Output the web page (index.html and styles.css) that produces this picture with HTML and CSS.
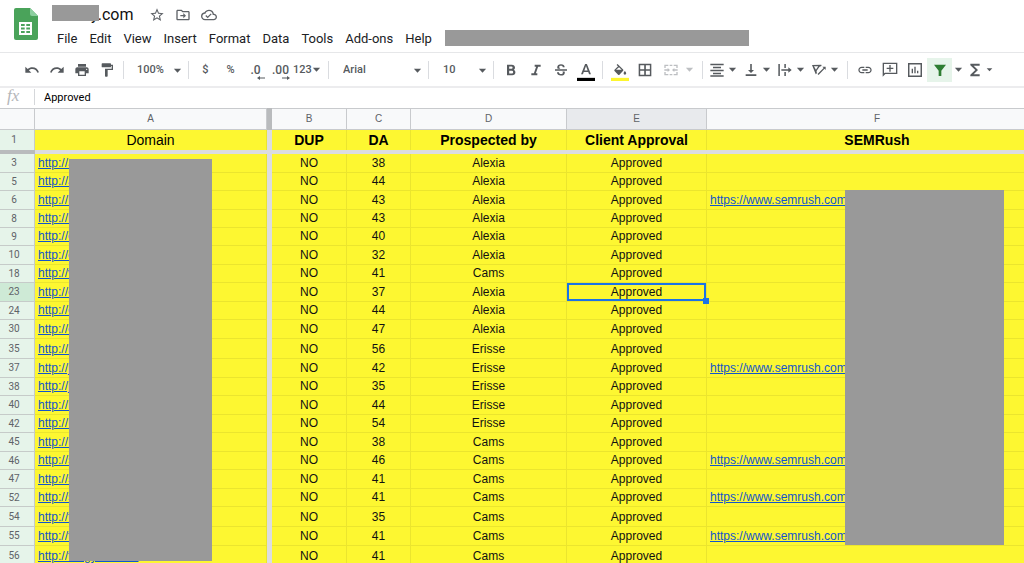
FILE: index.html
```html
<!DOCTYPE html>
<html lang="en">
<head>
<meta charset="utf-8">
<title>Sheet</title>
<link rel="stylesheet" href="styles.css">
</head>
<body>
<svg class="defs" aria-hidden="true">
  <symbol id="down" viewBox="0 0 8 8"><path d="M.8 2.500h6.400L4 5.900z"/></symbol>
</svg>
<header class="top">
  <svg class="logo" viewBox="0 0 24 32" aria-hidden="true">
    <path fill="#4aa35a" d="M2 0h14l8 8v22a2 2 0 0 1-2 2H2a2 2 0 0 1-2-2V2a2 2 0 0 1 2-2z"/>
    <path fill="#8ccf9f" d="M16 0l8 8h-6a2 2 0 0 1-2-2z"/>
    <path fill="#fff" fill-rule="evenodd" d="M5 14h13v13H5zM7 16v2h3.700v-2zM12.300 16v2H16v-2zM7 19.500v2h3.700v-2zM12.300 19.500v2H16v-2zM7 23v2h3.700v-2zM12.300 23v2H16v-2z"/>
  </svg>
  <div class="top-main">
    <div class="title-row">
      <h1 class="title">y.com<span class="mask mask-title"></span></h1>
      <button class="title-btn" aria-label="Star"><svg viewBox="0 0 24 24"><path d="M22 9.240l-7.190-.62L12 2 9.190 8.630 2 9.240l5.460 4.730L5.820 21 12 17.270 18.180 21l-1.630-7.030L22 9.240zM12 15.400l-3.760 2.270 1-4.280-3.320-2.880 4.380-.38L12 6.100l1.710 4.040 4.380.38-3.320 2.880 1 4.280L12 15.400z"/></svg></button>
      <button class="title-btn" aria-label="Move"><svg viewBox="0 0 24 24"><path d="M20 6h-8l-2-2H4c-1.100 0-2 .9-2 2v12c0 1.100.9 2 2 2h16c1.100 0 2-.9 2-2V8c0-1.100-.9-2-2-2zm0 12H4V6h5.170l2 2H20v10zm-7.500-1l4-4-4-4v3H8v2h4.500z"/></svg></button>
      <button class="title-btn" aria-label="Saved"><svg viewBox="0 0 24 24"><path d="M19.350 10.040A7.490 7.490 0 0 0 12 4C9.110 4 6.600 5.640 5.350 8.040A5.994 5.994 0 0 0 0 14c0 3.310 2.690 6 6 6h13c2.760 0 5-2.240 5-5 0-2.640-2.050-4.780-4.650-4.960zM19 18H6c-2.210 0-4-1.790-4-4s1.790-4 4-4h.71C7.370 7.690 9.480 6 12 6c3.040 0 5.500 2.460 5.500 5.500v.5H19c1.660 0 3 1.340 3 3s-1.340 3-3 3zm-9-3.820l-2.090-2.090L6.500 13.500 10 17l6.010-6.010-1.410-1.410z"/></svg></button>
    </div>
    <nav class="menu">
      <button>File</button><button>Edit</button><button>View</button><button>Insert</button><button>Format</button><button>Data</button><button>Tools</button><button>Add-ons</button><button>Help</button>
      <span class="mask-menu"></span>
    </nav>
  </div>
</header>
<div class="toolbar">
  <button class="tool" aria-label="Undo"><svg viewBox="0 0 24 24"><path d="M12.500 8c-2.650 0-5.050.99-6.900 2.600L2 7v9h9l-3.620-3.620c1.390-1.160 3.160-1.880 5.120-1.880 3.540 0 6.550 2.310 7.600 5.500l2.370-.78C21.080 11.030 17.150 8 12.500 8z"/></svg></button>
  <button class="tool" aria-label="Redo"><svg viewBox="0 0 24 24"><path d="M18.400 10.600C16.550 8.990 14.150 8 11.500 8c-4.650 0-8.580 3.030-9.960 7.220L3.900 16c1.050-3.190 4.050-5.500 7.600-5.500 1.950 0 3.730.72 5.120 1.880L13 16h9V7l-3.600 3.600z"/></svg></button>
  <button class="tool" aria-label="Print"><svg viewBox="0 0 24 24"><path d="M19 8H5c-1.660 0-3 1.340-3 3v6h4v4h12v-4h4v-6c0-1.660-1.340-3-3-3zm-3 11H8v-5h8v5zm3-7c-.55 0-1-.45-1-1s.45-1 1-1 1 .45 1 1-.45 1-1 1zm-1-9H6v4h12V3z"/></svg></button>
  <button class="tool" aria-label="Paint format"><svg viewBox="0 0 24 24"><path d="M18 4V3c0-.55-.45-1-1-1H5c-.55 0-1 .45-1 1v4c0 .55.45 1 1 1h12c.55 0 1-.45 1-1V6h1v4H9v11c0 .55.45 1 1 1h2c.55 0 1-.45 1-1v-9h8V4h-3z"/></svg></button>
  <span class="sep"></span>
  <span class="pick pick-zoom"><select aria-label="Zoom"><option>100%</option></select><svg class="arrow"><use href="#down"/></svg></span>
  <span class="sep"></span>
  <button class="tool">$</button>
  <button class="tool">%</button>
  <button class="tool tool-dec" aria-label="Decrease decimals"><span>.0</span><svg viewBox="0 0 8 4"><path d="M0 2l3-2v1.400h5v1.200H3V4z"/></svg></button>
  <button class="tool tool-dec" aria-label="Increase decimals"><span>.00</span><svg viewBox="0 0 8 4"><path d="M8 2L5 0v1.400H0v1.200h5V4z"/></svg></button>
  <button class="formats">123<svg class="arrow"><use href="#down"/></svg></button>
  <span class="sep"></span>
  <span class="pick pick-font"><select aria-label="Font"><option>Arial</option></select><svg class="arrow"><use href="#down"/></svg></span>
  <span class="sep"></span>
  <span class="pick pick-size"><select aria-label="Font size"><option>10</option></select><svg class="arrow"><use href="#down"/></svg></span>
  <span class="sep"></span>
  <button class="tool" aria-label="Bold"><svg viewBox="0 0 24 24"><path d="M16.100 11.700c1.100-.8 1.900-2 1.900-3.200C18 5.800 15.900 4 13.200 4H6v16h8c2.700 0 4.600-2.100 4.600-4.600 0-1.700-1-3.100-2.500-3.700zM9.300 6.800h3.400a1.700 1.700 0 0 1 0 3.400H9.300zm4 10.400h-4v-3.900h4a1.950 1.950 0 0 1 0 3.900z"/></svg></button>
  <button class="tool" aria-label="Italic"><svg viewBox="0 0 24 24"><path d="M10 4v3h2.210l-3.420 10H5v3h9v-3h-2.210l3.420-10H19V4z"/></svg></button>
  <button class="tool" aria-label="Strikethrough"><svg viewBox="0 0 24 24"><path d="M3 11h18v2.200H3zM7 10c-.5-.8-.6-1.500-.6-2.300C6.400 5.200 8.700 3.500 12 3.500s5.500 1.800 5.500 4.500h-2.800c0-1.400-1-2.200-2.700-2.200s-2.700.7-2.700 1.800c0 .9.500 1.600 1.700 2.400zM14 14.200h3.300c.3.500.4 1.100.4 1.800 0 2.700-2.300 4.400-5.700 4.400s-6-1.800-6-5h2.900c0 1.800 1.200 2.700 3.100 2.700 1.700 0 2.800-.7 2.800-2 0-.8-.2-1.400-.8-1.900z"/></svg></button>
  <button class="tool" aria-label="Text colour"><svg class="swatched" viewBox="0 0 20 20"><path d="M9 1L4.500 12.500h2.100l.9-2.500h5l.9 2.500h2.100L11 1zM8.200 8.200L10 3.200l1.800 5z"/><path fill="#000" d="M0 16.500h20V20H0z"/></svg></button>
  <span class="sep"></span>
  <button class="tool" aria-label="Fill colour"><svg class="swatched" viewBox="0 0 20 20"><path d="M13.500 7.200L7.300 1 6.200 2.100l1.600 1.600-3.900 3.900c-.4.400-.4 1 0 1.400l4 4c.4.4 1.100.4 1.500 0l4.100-4.300c.4-.4.4-1 0-1.500zM5.600 7.600L8.900 4.800l3 2.800zM15.400 9s-1.400 1.600-1.400 2.500a1.400 1.400 0 0 0 2.900 0c0-.9-1.500-2.500-1.500-2.500z"/><path fill="#fdf62f" d="M0 16.500h20V20H0z"/></svg></button>
  <button class="tool" aria-label="Borders"><svg viewBox="0 0 24 24"><path d="M2.500 2.500v19h19v-19zm8.300 16.800H4.800v-6h6zm0-8.600H4.800v-6h6zm8.500 8.600h-6v-6h6zm0-8.600h-6v-6h6z"/></svg></button>
  <button class="tool-dd merge" aria-label="Merge cells"><svg viewBox="0 0 24 24"><path d="M2 4h6v2H4v3H2zM10 4h4v2h-4zM16 4h6v5h-2V6h-4zM2 15h2v3h4v2H2zM10 18h4v2h-4zM20 15h2v5h-6v-2h4zM2 11h5V9l3.500 3L7 15v-2H2zM22 11h-5V9l-3.500 3 3.500 3v-2h5z"/></svg><svg class="arrow"><use href="#down"/></svg></button>
  <span class="sep"></span>
  <button class="tool-dd" aria-label="Horizontal align"><svg viewBox="0 0 24 24"><path d="M2 2.500h20v2.300H2zM6 7h12v2.300H6zM2 11.500h20v2.300H2zM6 16h12v2.300H6zM2 20h20v2.300H2z"/></svg><svg class="arrow"><use href="#down"/></svg></button>
  <button class="tool-dd" aria-label="Vertical align"><svg viewBox="0 0 24 24"><path d="M16.500 12H13.200V3h-2.400v9H7.500l4.500 4.500zM4 18.500h16v2.400H4z"/></svg><svg class="arrow"><use href="#down"/></svg></button>
  <button class="tool-dd" aria-label="Text wrapping"><svg viewBox="0 0 24 24"><path d="M2 3h2.300v18H2zM11 3h2.300v6H11zM11 15h2.300v6H11zM6.500 11H17V8l5 4-5 4v-3H6.500z"/></svg><svg class="arrow"><use href="#down"/></svg></button>
  <button class="tool-dd" aria-label="Text rotation"><svg viewBox="0 0 24 24"><path fill-rule="evenodd" d="M1.500 4.500L15.500 4l.3 2-3 1-4.500 6.500.6 3.500-1.800 1.500zM4.500 6.200l2.900 5.400L10.800 6.500zM22 7v5l-1.700-1.700-9 9.200-1.500-1.500 9.100-9.100L17 7z"/></svg><svg class="arrow"><use href="#down"/></svg></button>
  <span class="sep"></span>
  <button class="tool" aria-label="Insert link"><svg viewBox="0 0 24 24"><path d="M3.900 12c0-1.710 1.390-3.100 3.100-3.100h4V7H7c-2.760 0-5 2.240-5 5s2.240 5 5 5h4v-1.900H7c-1.710 0-3.100-1.390-3.100-3.100zM8 13h8v-2H8v2zm9-6h-4v1.900h4c1.710 0 3.100 1.390 3.100 3.100s-1.390 3.100-3.100 3.100h-4V17h4c2.760 0 5-2.240 5-5s-2.240-5-5-5z"/></svg></button>
  <button class="tool" aria-label="Insert comment"><svg viewBox="0 0 24 24"><path d="M1 1h22v17H5l-4 4zM3 3v14l1.200-1H21V3zM11 4.500h2V8.500h4v2h-4v4h-2v-4H7v-2h4z"/></svg></button>
  <button class="tool" aria-label="Insert chart"><svg viewBox="0 0 24 24"><path d="M1.500 1.500h21v21h-21zM3.700 3.700v16.600h16.600V3.700zM7 10h2v7H7zM11 7h2v10h-2zM15 13h2v4h-2z"/></svg></button>
  <button class="tool filter" aria-label="Filter"><svg viewBox="0 0 24 24"><path d="M3 4h18l-7 9v8h-4v-8z"/></svg></button>
  <button class="tool-arrow" aria-label="Filter views"><svg class="arrow"><use href="#down"/></svg></button>
  <button class="tool-dd" aria-label="Functions"><svg viewBox="0 0 24 24"><path d="M19 2.500H5V5l7.500 7L5 19v2.500h14v-3.200H10L16.500 12 10 5.700h9z"/></svg><svg class="arrow arrow-small"><use href="#down"/></svg></button>
</div>
<div class="formula">
  <label class="fx" for="cell-value">fx</label>
  <input id="cell-value" class="cell-value" value="Approved">
</div>
<main class="grid">
  <table>
    <colgroup><col class="c-num"><col class="c-a"><col class="c-freeze"><col class="c-b"><col class="c-c"><col class="c-d"><col class="c-e"><col class="c-f"></colgroup>
    <thead>
      <tr class="letters"><th></th><th>A</th><th class="bar"></th><th>B</th><th>C</th><th>D</th><th class="current">E</th><th>F</th></tr>
      <tr class="names"><th class="num">1</th><td class="plain">Domain</td><td class="freeze"></td><td>DUP</td><td>DA</td><td>Prospected by</td><td>Client Approval</td><td>SEMRush</td></tr>
      <tr class="freeze-row"><td class="bar"></td><td colspan="7"></td></tr>
    </thead>
    <tbody id="rows"></tbody>
  </table>
  <span class="mask mask-domains"></span>
  <span class="mask mask-semrush"></span>
</main>
<script src="rows.js"></script>
</body>
</html>
```
FILE: styles.css
```css
* { box-sizing: border-box; }
body { margin: 0; height: 100vh; overflow: hidden; display: flex; flex-direction: column; background: #fff; color: #202124; font-family: Roboto, Arial, sans-serif; }
button { border: 0; padding: 0; margin: 0; background: none; color: inherit; font: inherit; }
svg { display: block; fill: currentColor; flex: none; }
.defs { position: absolute; width: 0; height: 0; }
.mask { position: absolute; background: #999; }

.top { flex: none; display: flex; height: 53px; padding: 8px 0 0 14px; border-bottom: 1px solid #e6e7e9; }
.logo { width: 24px; height: 32px; }
.top-main { flex: 1; margin: -4px 0 0 14px; }
.title-row { display: flex; align-items: center; height: 22px; }
.title { position: relative; margin: 0 16px 0 0; padding-left: 39px; font-size: 16px; line-height: 22px; font-weight: 400; color: #111; }
.mask-title { left: 0; top: 1px; width: 47px; height: 16px; }
.title-btn { width: 16px; margin-right: 10px; color: #5f6368; }
.title-btn svg { width: 16px; height: 16px; }
.menu { display: flex; align-items: center; gap: 12px; padding-left: 5px; height: 24px; font-size: 13px; }
.mask-menu { width: 304px; height: 16px; margin-left: 1px; background: #999; }

.toolbar { flex: none; display: flex; align-items: center; height: 35px; padding-left: 19px; border-bottom: 2px solid #ececee; color: #565a5e; font-size: 11px; font-weight: 500; }
.sep { flex: none; width: 1px; height: 18px; margin: 0 4px; background: #dadce0; }
.tool { flex: none; display: flex; align-items: center; justify-content: center; width: 25px; height: 24px; }
.tool svg, .tool-dd svg { width: 16px; height: 16px; }
.tool .swatched { width: 18px; height: 18px; margin-top: 4px; }
.arrow, .tool-dd .arrow { width: 9px; height: 9px; }
.tool-dd .arrow-small { width: 7px; height: 7px; }
.tool-dd { flex: none; display: flex; align-items: center; gap: 3px; width: 34px; padding-left: 2px; height: 24px; }
.merge { width: 41px; padding-left: 6px; gap: 6px; color: #bdbfc2; }
.tool-arrow { width: 13px; display: flex; justify-content: center; }
.filter { background: #e6f4ea; color: #2e7d32; }
.tool-dec { flex-direction: column; font-size: 12px; line-height: 12px; padding-top: 4px; }
.tool-dec svg { width: 8px; height: 4px; align-self: flex-end; margin-right: 3px; }
.formats { display: flex; align-items: center; width: 31px; }
.pick { position: relative; flex: none; }
.pick select { width: 100%; height: 24px; border: 0; padding: 0; background: none; appearance: none; color: inherit; font: inherit; }
.pick .arrow { position: absolute; right: 2px; top: 8px; pointer-events: none; }
.pick-zoom { width: 56px; }
.pick-zoom select { padding-left: 9px; }
.pick-font { width: 91px; }
.pick-font select { padding-left: 10px; }
.pick-size { width: 56px; }
.pick-size select { padding-left: 10px; }

.formula { flex: none; display: flex; align-items: center; height: 20px; padding-bottom: 2px; }
.fx { width: 35px; height: 16px; padding-left: 7px; border-right: 1px solid #d5d7da; color: #b4b6b9; font: italic 17px/14px "Liberation Serif", serif; }
.cell-value { flex: 1; border: 0; outline: 0; padding: 0 9px; height: 18px; background: none; color: #000; font: 11px Roboto, sans-serif; }

.grid { position: relative; flex: 1; min-height: 0; overflow: hidden; font-family: "Liberation Sans", Arial, sans-serif; }
table { width: 1048px; table-layout: fixed; border-collapse: separate; border-spacing: 0; }
.c-num { width: 35px; }
.c-a { width: 232px; }
.c-freeze { width: 5px; }
.c-b { width: 75px; }
.c-c { width: 64px; }
.c-d { width: 156px; }
.c-e { width: 140px; }
th, td { padding: 0; overflow: hidden; text-align: center; white-space: nowrap; border: 0 solid #ebe52e; border-width: 0 1px 1px 0; }
td { background: #fdf731; color: #111; font-size: 12px; line-height: 12px; }
.letters th { height: 22px; border: 0 solid #c8cacd; border-width: 1px 1px 1px 0; background: #f8f9fa; color: #5f6368; font-size: 10px; line-height: 12px; font-weight: 400; }
.letters .current { background: #e8eaed; }
.letters .bar, .freeze-row .bar { background: #b9bbbd; border-color: #b9bbbd; }
.num { background: #e6f4ea; border-color: #c6cbc9; color: #5f6368; font: 10px/12px Roboto, sans-serif; padding-right: 6px; }
.num-current { background: #ceead6; }
.names .num, .names td { height: 20px; border-bottom: 0; }
.names td { font-size: 14px; line-height: 16px; font-weight: 700; color: #000; }
.names .plain { font-weight: 400; }
.freeze, .names .freeze { background: #dcdde0; border: 0; }
.freeze-row td { height: 4px; line-height: 0; background: #dcdde0; border: 0; }
.h18 { height: 18px; }
.h19 { height: 19px; }
.h20 { height: 20px; }
tbody td { vertical-align: bottom; padding-bottom: 3px; }
.link { text-align: left; padding-left: 3px; }
.link a { color: #1155cc; }
.selected { box-shadow: inset 0 0 0 2px #1a73e8; position: relative; overflow: visible; }
.handle { position: absolute; right: -3px; bottom: -3px; width: 6px; height: 6px; background: #1a73e8; z-index: 1; }
.mask-domains { left: 69px; top: 51px; width: 143px; height: 402px; }
.mask-semrush { left: 845px; top: 82px; width: 159px; height: 355px; }
```
FILE: rows.js
```js
const site = "https://www.semrush.com/";
const rows = [
  [3, "a", 38, "Alexia", 19], [5, "a", 44, "Alexia", 18], [6, "l", 43, "Alexia", 19, site],
  [8, "l", 43, "Alexia", 18], [9, "c", 40, "Alexia", 18], [10, "c", 32, "Alexia", 19],
  [18, "v", 41, "Cams", 18], [23, "c", 37, "Alexia", 19], [24, "c", 44, "Alexia", 18],
  [30, "c", 47, "Alexia", 19], [35, "i", 56, "Erisse", 20], [37, "j", 42, "Erisse", 19, site],
  [38, "j", 35, "Erisse", 18], [40, "r", 44, "Erisse", 19], [42, "r", 54, "Erisse", 18],
  [45, "r", 38, "Cams", 19], [46, "s", 46, "Cams", 18, site], [47, "s", 41, "Cams", 19],
  [52, "s", 41, "Cams", 18, site], [54, "t", 35, "Cams", 20], [55, "t", 41, "Cams", 19, site],
  [56, "tecgy.com.au", 41, "Cams", 20]
];
document.getElementById("rows").innerHTML = rows.map(([n, d, da, who, h, url]) => {
  const current = n === 23;
  return `<tr class="h${h}"><th class="num${current ? " num-current" : ""}">${n}</th>` +
    `<td class="link"><a href="#">http://${d}</a></td><td class="freeze"></td>` +
    `<td>NO</td><td>${da}</td><td>${who}</td>` +
    `<td${current ? ' class="selected"' : ""}>Approved${current ? '<span class="handle"></span>' : ""}</td>` +
    `<td class="link">${url ? `<a href="#">${url}</a>` : ""}</td></tr>`;
}).join("");
```
